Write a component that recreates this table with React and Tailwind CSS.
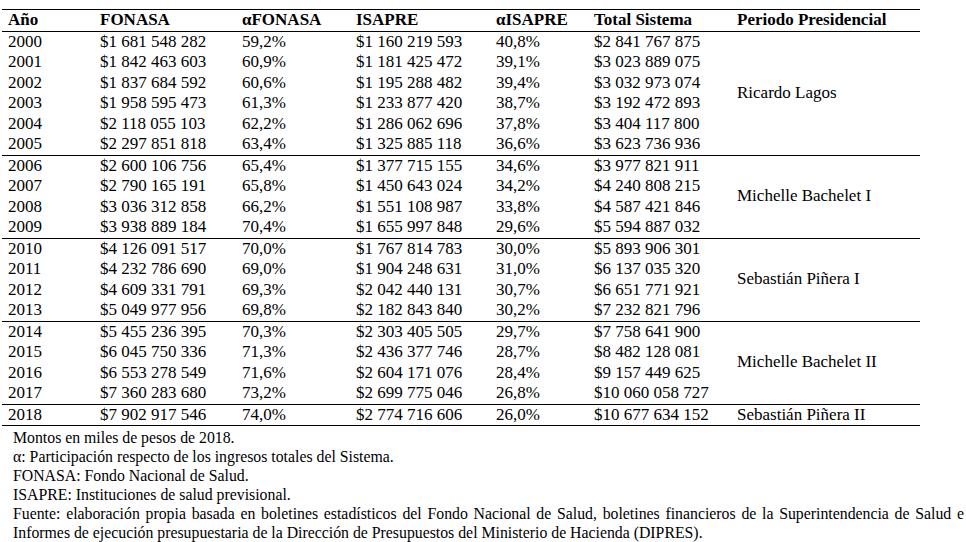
const cols = "grid grid-cols-[92px_142px_114px_140px_98px_143px]";

const groups = [
  {
    periodo: "Ricardo Lagos",
    rows: [
      ["2000", "$1 681 548 282", "59,2%", "$1 160 219 593", "40,8%", "$2 841 767 875"],
      ["2001", "$1 842 463 603", "60,9%", "$1 181 425 472", "39,1%", "$3 023 889 075"],
      ["2002", "$1 837 684 592", "60,6%", "$1 195 288 482", "39,4%", "$3 032 973 074"],
      ["2003", "$1 958 595 473", "61,3%", "$1 233 877 420", "38,7%", "$3 192 472 893"],
      ["2004", "$2 118 055 103", "62,2%", "$1 286 062 696", "37,8%", "$3 404 117 800"],
      ["2005", "$2 297 851 818", "63,4%", "$1 325 885 118", "36,6%", "$3 623 736 936"],
    ],
  },
  {
    periodo: "Michelle Bachelet I",
    rows: [
      ["2006", "$2 600 106 756", "65,4%", "$1 377 715 155", "34,6%", "$3 977 821 911"],
      ["2007", "$2 790 165 191", "65,8%", "$1 450 643 024", "34,2%", "$4 240 808 215"],
      ["2008", "$3 036 312 858", "66,2%", "$1 551 108 987", "33,8%", "$4 587 421 846"],
      ["2009", "$3 938 889 184", "70,4%", "$1 655 997 848", "29,6%", "$5 594 887 032"],
    ],
  },
  {
    periodo: "Sebastián Piñera I",
    rows: [
      ["2010", "$4 126 091 517", "70,0%", "$1 767 814 783", "30,0%", "$5 893 906 301"],
      ["2011", "$4 232 786 690", "69,0%", "$1 904 248 631", "31,0%", "$6 137 035 320"],
      ["2012", "$4 609 331 791", "69,3%", "$2 042 440 131", "30,7%", "$6 651 771 921"],
      ["2013", "$5 049 977 956", "69,8%", "$2 182 843 840", "30,2%", "$7 232 821 796"],
    ],
  },
  {
    periodo: "Michelle Bachelet II",
    rows: [
      ["2014", "$5 455 236 395", "70,3%", "$2 303 405 505", "29,7%", "$7 758 641 900"],
      ["2015", "$6 045 750 336", "71,3%", "$2 436 377 746", "28,7%", "$8 482 128 081"],
      ["2016", "$6 553 278 549", "71,6%", "$2 604 171 076", "28,4%", "$9 157 449 625"],
      ["2017", "$7 360 283 680", "73,2%", "$2 699 775 046", "26,8%", "$10 060 058 727"],
    ],
  },
  {
    periodo: "Sebastián Piñera II",
    rows: [
      ["2018", "$7 902 917 546", "74,0%", "$2 774 716 606", "26,0%", "$10 677 634 152"],
    ],
  },
];

const headers = ["Año", "FONASA", "αFONASA", "ISAPRE", "αISAPRE", "Total Sistema"];

export default function App() {
  return (
    <div
      className="bg-white min-h-screen w-[966px] h-[542px] overflow-hidden text-black pt-[9px]"
      style={{ fontFamily: '"Liberation Serif", "Times New Roman", serif' }}
    >
      {/* Table */}
      <div className="ml-[2px] w-[918px] text-[17px] leading-[20.5px]">

        {/* Header */}
        <div className="flex border-t border-b border-black font-bold">
          <div className={cols}>
            {headers.map((h) => (
              <div key={h} className="h-[20.5px] pl-[6px] whitespace-nowrap">
                {h}
              </div>
            ))}
          </div>
          <div className="flex-1 h-[20.5px] pl-[6px] whitespace-nowrap">
            Periodo Presidencial
          </div>
        </div>

        {/* Groups */}
        {groups.map((g) => (
          <div key={g.periodo} className="flex border-b border-black">
            <div className={cols}>
              {g.rows.map((r) =>
                r.map((c, i) => (
                  <div key={r[0] + i} className="h-[20.5px] pl-[6px] whitespace-nowrap">
                    {c}
                  </div>
                ))
              )}
            </div>
            <div className="flex-1 flex items-center pl-[6px] whitespace-nowrap">
              {g.periodo}
            </div>
          </div>
        ))}
      </div>

      {/* Notes */}
      <div className="ml-[13px] w-[951px] text-[15.8px] leading-[19px] pt-[2px]">
        <p>Montos en miles de pesos de 2018.</p>
        <p>α: Participación respecto de los ingresos totales del Sistema.</p>
        <p>FONASA: Fondo Nacional de Salud.</p>
        <p>ISAPRE: Instituciones de salud previsional.</p>
        <p className="text-justify [text-align-last:justify] whitespace-nowrap">
          Fuente: elaboración propia basada en boletines estadísticos del Fondo Nacional de Salud, boletines financieros de la Superintendencia de Salud e
        </p>
        <p>Informes de ejecución presupuestaria de la Dirección de Presupuestos del Ministerio de Hacienda (DIPRES).</p>
      </div>
    </div>
  );
}
